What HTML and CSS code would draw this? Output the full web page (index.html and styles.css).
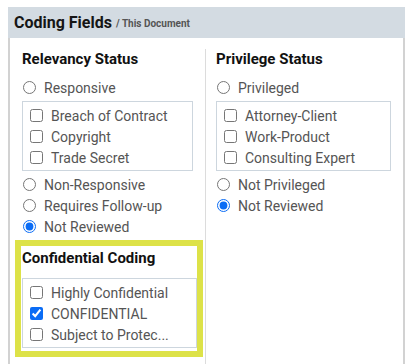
FILE: index.html
```html
<!doctype html>
<html>
<head>
<meta charset="utf-8">
<title>Coding Fields</title>
<link rel="stylesheet" href="styles.css">
</head>
<body>
<div class="coding">
	<div class="coding-head">Coding Fields <span class="sub">/ This Document</span></div>
	<div class="panel">
		<div class="col col-left">
			<h3>Relevancy Status</h3>
			<label class="row"><input type="radio" name="rel" /><span>Responsive</span></label>
			<div class="group">
				<label class="row"><input type="checkbox" /><span>Breach of Contract</span></label>
				<label class="row"><input type="checkbox" /><span>Copyright</span></label>
				<label class="row"><input type="checkbox" /><span>Trade Secret</span></label>
			</div>
			<label class="row"><input type="radio" name="rel" /><span>Non-Responsive</span></label>
			<label class="row"><input type="radio" name="rel" /><span>Requires Follow-up</span></label>
			<label class="row"><input type="radio" name="rel" checked /><span>Not Reviewed</span></label>

			<div class="conf">
				<h3>Confidential Coding</h3>
				<div class="group">
					<label class="row"><input type="checkbox" /><span>Highly Confidential</span></label>
					<label class="row"><input type="checkbox" checked /><span>CONFIDENTIAL</span></label>
					<label class="row"><input type="checkbox" /><span>Subject to Protec...</span></label>
				</div>
			</div>
		</div>
		<div class="col col-right">
			<h3>Privilege Status</h3>
			<label class="row"><input type="radio" name="priv" /><span>Privileged</span></label>
			<div class="group">
				<label class="row"><input type="checkbox" /><span>Attorney-Client</span></label>
				<label class="row"><input type="checkbox" /><span>Work-Product</span></label>
				<label class="row"><input type="checkbox" /><span>Consulting Expert</span></label>
			</div>
			<label class="row"><input type="radio" name="priv" /><span>Not Privileged</span></label>
			<label class="row"><input type="radio" name="priv" checked /><span>Not Reviewed</span></label>
		</div>
	</div>
</div>
</body>
</html>
```

FILE: styles.css
```css
*{ margin:0; padding:0; box-sizing:border-box;}
body{ font-family:Roboto, "Liberation Sans", Arial, sans-serif; background:#fff; color:#111;}

.coding{ margin:7px 5px 0 8px;}
.coding-head{ height:31px; background:#d3dbe2; padding-left:6px; display:flex; align-items:center; font-size:16px; font-weight:bold; color:#151515;}
.coding-head .sub{ font-size:10px; color:#555; margin-left:4px; margin-top:2px;}

.panel{ display:flex; border-left:2px solid #d2d2d2; border-right:2px solid #d2d2d2; min-height:330px; padding-top:11px;}
.col{ display:flex; flex-direction:column;}
.col-left{ width:195px; padding:2px 12px 0 12px;}
.col-right{ flex:1; border-left:1px solid #dcdcdc; padding:2px 12px 0 10px;}

h3{ font-size:15px; line-height:16px; font-weight:bold; color:#111; margin-bottom:10px;}

.row{ display:flex; align-items:center; height:21px; font-size:14px; color:#555;}
.row input{ width:13px; height:13px; margin:0 8px 0 1px; accent-color:#0a6cf5; flex:none;}
.row input[type=checkbox]{ margin-left:0;}

.group{ border:1px solid #cdd6de; padding:3px 0 2px 7px; margin:3px 0;}

.conf{ margin:3px 0 0 -7px; width:188px; border:6px solid #dde248; padding:4px 0 3px 1px;}
.conf h3{ margin-bottom:12px;}
.conf .group{ margin:0;}
```
